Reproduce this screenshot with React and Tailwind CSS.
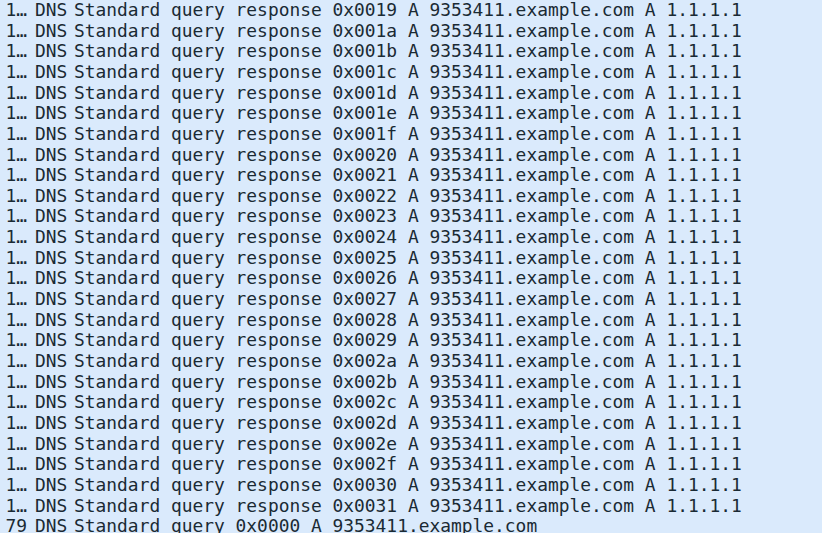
import React from "react";

const ids = [];
for (let i = 0x19; i <= 0x31; i++) ids.push("0x" + i.toString(16).padStart(4, "0"));

function Row({ no, info }) {
  return (
    <div className="flex h-[20.66px] items-center whitespace-nowrap">
      <div className="w-[27px] shrink-0 text-right">{no}</div>
      <div className="w-[47px] shrink-0 pl-[8px]">DNS</div>
      <div>{info}</div>
    </div>
  );
}

export default function App() {
  return (
    <div
      className="h-[533px] w-[822px] overflow-hidden bg-[#daeafc] text-[17.9px] text-[#1a2a34]"
      style={{ fontFamily: '"DejaVu Sans Mono", monospace' }}
    >
      {ids.map((id) => (
        <Row key={id} no="1…" info={`Standard query response ${id} A 9353411.example.com A 1.1.1.1`} />
      ))}
      <Row no="79" info="Standard query 0x0000 A 9353411.example.com" />
    </div>
  );
}
